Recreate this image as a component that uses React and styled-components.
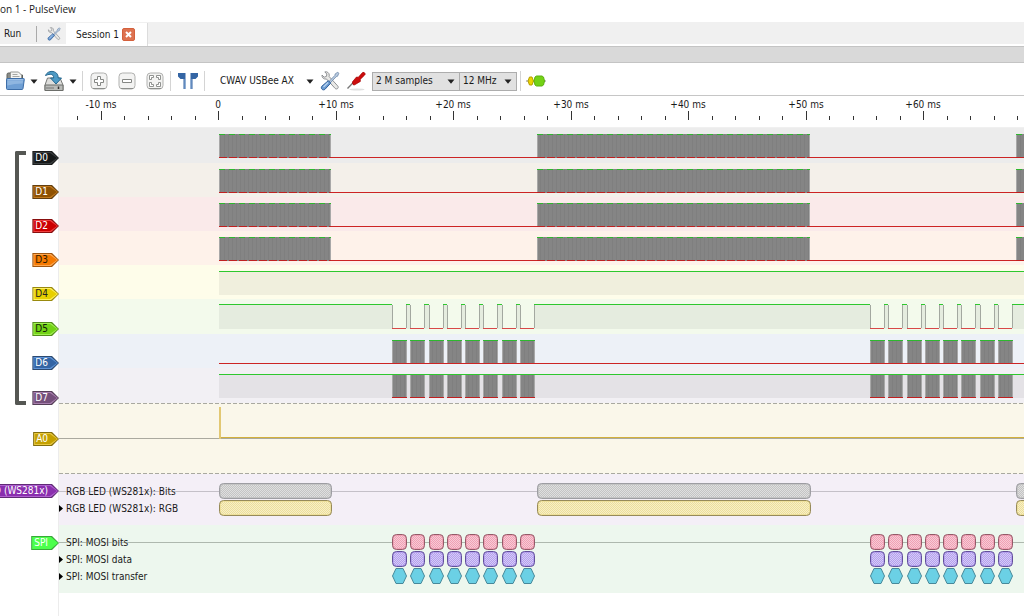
import React, { useEffect, useState } from "react";
import styled, { createGlobalStyle } from "styled-components";

const PX_PER_MS = 11.75;
const ZERO_X = 160;
const HEADER_WIDTH = 59;
const HIGH = 6;
const LOW = 29;

const timeToX = (ms) => ZERO_X + ms * PX_PER_MS;

const BURSTS = [
  [160, 272],
  [478, 751],
  [957, 1230],
];
const makeFrames = (start) =>
  Array.from({ length: 8 }, (_, i) => Math.round(start + i * 18.25));
const FRAME_GROUPS = [makeFrames(333), makeFrames(811)];
const FRAMES = FRAME_GROUPS.flat();
const FRAME_WIDTH = 14;

const CHANNELS = [
  { id: "D0", height: 35, tag: "#16191a", light: "#3a3e40", text: "#fff", back: "#ececec", kind: "burst" },
  { id: "D1", height: 34, tag: "#8f5202", light: "#c17a20", text: "#fff", back: "#f4f0ea", kind: "burst" },
  { id: "D2", height: 34, tag: "#cc0000", light: "#f04040", text: "#fff", back: "#faeaea", kind: "burst" },
  { id: "D3", height: 34, tag: "#f57900", light: "#ffa850", text: "#2a1a00", back: "#fef2ea", kind: "burst" },
  { id: "D4", height: 34, tag: "#e8d000", light: "#fff060", text: "#222", back: "#fefdea", kind: "high" },
  { id: "D5", height: 35, tag: "#73d216", light: "#a0f050", text: "#10200a", back: "#f3faec", kind: "select" },
  { id: "D6", height: 34, tag: "#3465a4", light: "#5f94d8", text: "#fff", back: "#edf1f7", kind: "clock" },
  { id: "D7", height: 35, tag: "#75507b", light: "#a87fae", text: "#fff", back: "#f2f0f4", kind: "data" },
];

const GlobalStyle = createGlobalStyle`
  * { box-sizing: border-box; }
  body {
    margin: 0;
    background: #fff;
    color: #1a1a1a;
    font: 10px/14px "DejaVu Sans Condensed", "Open Sans", sans-serif;
    overflow-x: hidden;
  }
  button, select {
    font: inherit;
    color: inherit;
    border: 0;
    padding: 0;
    margin: 0;
    background: none;
  }
  svg { display: block; }
`;

const Window = styled.div`
  display: flex;
  flex-direction: column;
  min-height: 100vh;
  overflow: hidden;
`;

const TitleBar = styled.header`
  height: 22px;
  padding-top: 1px;
  font: 10px/16px "Open Sans", sans-serif;
  white-space: nowrap;
`;

const TabStrip = styled.nav`
  display: flex;
  align-items: center;
  height: 24px;
  padding: 2px 0 0 4px;
  background: #f0f0f0;
  border-bottom: 2px solid #fff;
`;

const RunButton = styled.button`
  width: 32px;
  text-align: left;
`;

const Divider = styled.span`
  flex: none;
  width: 1px;
  height: ${(p) => p.$height || 20}px;
  background: ${(p) => p.$color || "#d4d4d4"};
`;

const SettingsButton = styled.button`
  display: grid;
  place-items: center;
  width: 29px;
  padding-left: 4px;
`;

const Tab = styled.div`
  display: flex;
  align-items: center;
  gap: 3px;
  align-self: stretch;
  margin: -1px 0 -2px;
  padding: 0 12px 0 10px;
  background: #fff;
  border-right: 1px solid #dcdcdc;
`;

const CloseButton = styled.button`
  display: grid;
  place-items: center;
  width: 13px;
  height: 13px;
  border: 1px solid #d4603c;
  border-radius: 2px;
  background: #dd7250;
`;

const DockBar = styled.div`
  height: 17px;
  background: #d9d9d9;
  border-top: 1px solid #c4c4c4;
  border-bottom: 1px solid #c4c4c4;
`;

const Toolbar = styled.div`
  display: flex;
  align-items: center;
  gap: 3px;
  height: 33px;
  padding: 4px 4px 0;
  border-bottom: 1px solid #c6c6c6;
`;

const SplitButton = styled.div`
  display: flex;
  gap: 2px;
`;

const ToolButton = styled.button`
  display: grid;
  place-items: center;
  flex: none;
  width: ${(p) => p.$width}px;
  height: 24px;
`;

const DeviceButton = styled.button`
  display: flex;
  align-items: center;
  justify-content: space-between;
  flex: none;
  width: 109px;
  height: 24px;
  padding: 0 3px 0 12px;
  white-space: nowrap;
`;

const SelectGroup = styled.div`
  display: flex;
`;

const SelectBox = styled.div`
  display: grid;
  align-items: center;
  width: ${(p) => p.$width}px;
  height: 19px;
  background: #e1e1e1;
  border: 1px solid #adadad;
  & + & { border-left: 0; }
  & > * { grid-area: 1 / 1; }
  & > svg { justify-self: end; margin-right: 4px; pointer-events: none; }
`;

const Select = styled.select`
  appearance: none;
  width: 100%;
  height: 17px;
  padding-left: 3px;
  border-radius: 0;
`;

const Workspace = styled.main`
  display: flex;
  flex: 1;
`;

const HeaderColumn = styled.aside`
  flex: none;
  display: flex;
  flex-direction: column;
  align-items: flex-end;
  width: ${HEADER_WIDTH}px;
  padding-top: 34px;
  overflow: hidden;
`;

const ChannelGroup = styled.div`
  display: flex;
  justify-content: space-between;
  align-self: stretch;
  padding-left: 15px;
`;

const Bracket = styled.div`
  width: 11px;
  margin-top: 21px;
  border: solid #555753;
  border-width: 4px 0 4px 4px;
  border-radius: 2px 0 0 2px;
`;

const TagColumn = styled.div`
  display: flex;
  flex-direction: column;
`;

const TagCell = styled.div`
  display: flex;
  align-items: flex-end;
  height: ${(p) => p.$height}px;
`;

const tagShape = "polygon(0 0, calc(100% - 7px) 0, 100% 50%, calc(100% - 7px) 100%, 0 100%)";

const Tag = styled.button`
  position: relative;
  isolation: isolate;
  height: 14px;
  padding: 0 11px 0 3px;
  line-height: 14px;
  white-space: nowrap;
  color: ${(p) => p.$text};
  background: color-mix(in srgb, ${(p) => p.$fill} 60%, #222);
  clip-path: ${tagShape};
  &::before, &::after {
    content: "";
    position: absolute;
    inset: 1px;
    z-index: -1;
    background: ${(p) => p.$light};
    clip-path: ${tagShape};
  }
  &::after {
    inset: 2px;
    background: ${(p) => p.$fill};
  }
`;

const View = styled.section`
  flex: 1;
  min-width: 0;
  border-left: 1px solid #ececec;
  margin-left: -1px;
  overflow: hidden;
`;

const Ruler = styled.svg`
  width: 100%;
  height: 32px;
  border-bottom: 1px solid #f0f0f0;
`;

const Trace = styled.svg`
  width: 100%;
  height: ${(p) => p.$height}px;
  background: ${(p) => p.$back || "transparent"};
`;

const DecoderTrace = styled.div`
  padding: 9px 0 8px;
  background: ${(p) => p.$back};
`;

const DecoderRow = styled.div`
  display: grid;
  align-items: center;
  height: 17px;
  & > * { grid-area: 1 / 1; }
`;

const RowLabel = styled.span`
  display: flex;
  align-items: center;
  gap: 3px;
  height: 17px;
  padding-left: ${(p) => (p.$expandable ? 0 : 7)}px;
  text-shadow: 0 0 1px ${(p) => p.$back}, 0 0 1px ${(p) => p.$back};
`;

const Caret = () => (
  <svg width="8" height="5" viewBox="0 0 8 5"><path d="M0.5 0.5h7L4 4.8z" fill="#222" /></svg>
);

const ToolsIcon = ({ size }) => (
  <svg width={size} height={size} viewBox="0 0 20 20">
    <path d="M2 4l2.200 2.200L6.500 5.300 6.800 3 4.800 0.900C7 0.300 9.200 1.700 9.300 4.200l-.2 1.300 8.500 9.300c1.800 1.900-.7 4.300-2.500 2.600L6.500 8C4 8.600 1.600 6.600 2 4z" fill="#e8e8e6" stroke="#85878a" strokeWidth=".9" />
    <path d="M18.800 2.200l-1-1-2.600 1.700-.3 1.500-5.700 5.900 1.300 1.300 5.700-5.900 1.400-.5z" fill="#b9cbe0" stroke="#6c87a8" strokeWidth=".8" />
    <path d="M8.300 9.700l2.400 2.400-5.800 6.300c-2 1.500-4.700-.9-3.100-3.100z" fill="#6c9bd0" stroke="#2f5f9b" />
    <path d="M3.500 16l4.500-4.500" stroke="#b8d4f2" strokeWidth="1.200" />
  </svg>
);

const OpenIcon = () => (
  <svg width="20" height="20" viewBox="0 0 20 20">
    <path d="M2 17V3.500Q2 2 3.500 2h4l1 2h9v13z" fill="#8a8c88" stroke="#5c5e5a" />
    <path d="M5.500 11V1h8l3 3V11z" fill="#f4f4f2" stroke="#969894" />
    <path d="M7.500 3.500h5M7.500 5.500h7" stroke="#a5a7a3" />
    <path d="M1.500 8.500Q1.500 7.500 2.500 7.500h16q1 0 .8 1L18 17.500q-.2 1-1 1H2.500q-1 0-1-1z" fill="#6f9fd4" stroke="#3d6ea8" />
    <path d="M2.700 8.700h15.500" stroke="#a9c9ec" />
    <path d="M2.300 9.500h15.800l-.5 3q-8 .2-15.300 2z" fill="#8fb6e0" />
  </svg>
);

const SaveIcon = () => (
  <svg width="22" height="22" viewBox="0 0 22 22">
    <path d="M4.500 8h12.500l3 7v5.500h-18V15z" fill="#dededc" stroke="#777976" />
    <path d="M2 15h18v5.500H2z" fill="#b9bbb8" stroke="#6c6e6a" />
    <path d="M4 17v2m2-2v2m2-2v2m2-2v2" stroke="#777" />
    <path d="M15.500 16.500v2.500" stroke="#333" strokeWidth="1.500" />
    <path d="M2.500 5.500C4 2 7.500 1 10 1.500c4 .8 5.200 3.500 5.200 6.500h3.300L13 14 7.500 8h3.200c0-2.500-1.200-3.700-3.500-3.700-1.800 0-2.700.5-4.700 1.200z" fill="#4d9ac5" stroke="#24678f" />
  </svg>
);

const ZoomFrame = ({ children }) => (
  <svg width="18" height="18" viewBox="0 0 18 18">
    <rect x="1" y="1" width="16" height="16" rx="3.500" fill="#f3f3f2" stroke="#b0b1af" />
    <path d="M3 16.500h12" stroke="#8d8f8c" />
    {children}
  </svg>
);

const ZoomInIcon = () => (
  <ZoomFrame><path d="M7.500 4.500h3v3h3v3h-3v3h-3v-3h-3v-3h3z" fill="#fff" stroke="#858784" /></ZoomFrame>
);
const ZoomOutIcon = () => (
  <ZoomFrame><path d="M4.500 7.500h9v3h-9z" fill="#fff" stroke="#858784" /></ZoomFrame>
);
const ZoomFitIcon = () => (
  <ZoomFrame>
    <path d="M3.500 3.500h4v2h-2v2h-2zM10.500 3.500h4v4h-2v-2h-2zM3.500 10.500h2v2h2v2h-4zM12.500 10.500h2v4h-4v-2h2z" fill="#fff" stroke="#858784" strokeWidth=".9" />
  </ZoomFrame>
);

const CursorsIcon = () => (
  <svg width="22" height="18" viewBox="0 0 22 18">
    <path d="M1 1h7.500v16H6.500V7H3.500L1 4.500zM13.500 1H21v3.500L18.500 7H15.500v10h-2z" fill="#3465a4" />
    <path d="M8 7v10M14 7v10" stroke="#8dafd8" />
  </svg>
);

const ProbeIcon = () => (
  <svg width="20" height="20" viewBox="0 0 20 20">
    <ellipse cx="11" cy="18.500" rx="7.500" ry="1" fill="#e0e0e0" />
    <path d="M1.500 17.500l6-6.300" stroke="#777" strokeWidth="1.300" />
    <path d="M6.500 10.800l4-4.800 1.800.3 4.200-4.700q1.800-.8 2.500.8.5 1-.5 1.800l-4.300 4.200.2 2-5.700 3.400q-1 .4-1.700-.4-.9-1-.5-2.600z" fill="#cc0d0d" stroke="#a40000" strokeWidth=".7" />
  </svg>
);

const DecoderIcon = () => (
  <svg width="20" height="12" viewBox="0 0 20 12">
    <path d="M0 6h20" stroke="#888" />
    <path d="M2 6l1.500-4h2.500L7.500 6 6 10H3.500z" fill="#edd400" stroke="#b59f00" />
    <path d="M8 6l1-4 1.500-1h5.500l1.500 1 1 4-1 4-1.500 1h-5.500l-1.500-1z" fill="#73d216" stroke="#5db00f" />
  </svg>
);

const useViewWidth = () => {
  const [width, setWidth] = useState(window.innerWidth - HEADER_WIDTH);
  useEffect(() => {
    const update = () => setWidth(window.innerWidth - HEADER_WIDTH);
    window.addEventListener("resize", update);
    return () => window.removeEventListener("resize", update);
  }, []);
  return width;
};

const RulerTicks = () => {
  const width = useViewWidth();
  const firstTick = -12;
  const lastTick = (width - ZERO_X) / PX_PER_MS;
  const times = [];
  for (let ms = firstTick; ms <= lastTick; ms += 2) times.push(ms);
  return (
    <Ruler>
      {times.map((ms) => {
        const x = Math.round(timeToX(ms)) - 1;
        const major = ms % 10 === 0;
        return (
          <g key={ms}>
            <rect x={x} y={major ? 15 : 20} width="1" height={major ? 9 : 4} fill="#333" />
            {major && (
              <text x={x} y="12" textAnchor="middle" fill="#1a1a1a">
                {ms === 0 ? "0" : `${ms > 0 ? "+" : ""}${ms} ms`}
              </text>
            )}
          </g>
        );
      })}
    </Ruler>
  );
};

const Patterns = () => (
  <svg width="0" height="0" aria-hidden="true">
    <defs>
      <pattern id="busy" width="8" height="8" patternUnits="userSpaceOnUse">
        <rect width="8" height="8" fill="#858585" />
        <path d="M1.500 0v8M5.500 0v8" stroke="#7f7f7f" />
      </pattern>
      <pattern id="hatch" width="2" height="2" patternUnits="userSpaceOnUse">
        <path d="M0 0h1v1H0zM1 1h1v1H1z" fill="#fff" fillOpacity=".45" />
      </pattern>
    </defs>
  </svg>
);

const Busy = ({ from, to, dashed = true }) => (
  <g>
    <rect x={from} y={HIGH} width={to - from} height={LOW - HIGH + 1} fill="url(#busy)" />
    <path d={`M${from + 0.5} ${HIGH}V${LOW}M${to - 0.5} ${HIGH}V${LOW}`} stroke="#a8a8a8" />
    <path d={`M${from} ${HIGH + 0.5}H${to}`} stroke="#2eb82e" strokeDasharray={dashed ? "6 4" : undefined} />
    <path d={`M${from} ${LOW + 0.5}H${to}`} stroke="#c02020" strokeDasharray={dashed ? "8 2" : undefined} />
  </g>
);

const HighFill = ({ from, to }) => (
  <rect x={from} y={HIGH} width={to ? to - from : "100%"} height={LOW - HIGH + 1} fill="#000" fillOpacity=".055" />
);

const Level = ({ y, from = ZERO_X, to, color }) => (
  <rect x={from} y={y} width={to ? to - from : "100%"} height="1" fill={color} />
);

const GREEN = "#2ec82e";
const RED = "#cc2424";

const SelectLine = () => {
  const highs = [];
  let cursor = ZERO_X;
  FRAMES.forEach((start) => {
    highs.push([cursor, start]);
    cursor = start + FRAME_WIDTH;
  });
  highs.push([cursor, 4000]);
  return (
    <g>
      {highs.map(([from, to]) => (
        <g key={from}>
          <HighFill from={from} to={to} />
          <Level y={HIGH - 1} from={from} to={to} color={GREEN} />
        </g>
      ))}
      {FRAMES.map((x) => (
        <g key={x}>
          <path d={`M${x + 0.5} ${HIGH}V${LOW}M${x + FRAME_WIDTH + 0.5} ${HIGH}V${LOW}`} stroke="#a3a8a0" />
          <Level y={LOW} from={x} to={x + FRAME_WIDTH} color="#d84848" />
        </g>
      ))}
    </g>
  );
};

const Waveform = ({ kind }) => {
  if (kind === "high") return <><HighFill from={ZERO_X} /><Level y={HIGH} color={GREEN} /></>;
  if (kind === "select") return <SelectLine />;
  if (kind === "burst")
    return (
      <>
        <Level y={LOW} color={RED} />
        {BURSTS.map(([a, b]) => <Busy key={a} from={a} to={b} />)}
      </>
    );
  const high = kind === "data";
  return (
    <>
      {high && <HighFill from={ZERO_X} />}
      {FRAMES.map((x) => <Busy key={x} from={x} to={x + FRAME_WIDTH + 1} dashed={false} />)}
      <Level y={high ? HIGH : LOW} color={high ? GREEN : RED} />
    </>
  );
};

const DashedEdge = ({ y = 0 }) => (
  <line x1="0" y1={y + 0.5} x2="100%" y2={y + 0.5} stroke="#a9a9a0" strokeDasharray="4 2" />
);

const Block = ({ x, width, fill, stroke }) => (
  <g>
    <rect x={x + 0.5} y="0.5" width={width} height="15" rx="4" fill={fill} stroke={stroke} />
    <rect x={x + 2} y="2" width={width - 3} height="12" rx="2" fill="url(#hatch)" />
  </g>
);

const BaseLine = ({ color }) => <Level y={8} from={0} color={color} />;

const BurstBlocks = ({ fill, stroke }) =>
  BURSTS.map(([a, b]) => <Block key={a} x={a} width={b - a} fill={fill} stroke={stroke} />);

const FrameBlocks = ({ fill, stroke }) =>
  FRAMES.map((x) => <Block key={x} x={x} width={FRAME_WIDTH} fill={fill} stroke={stroke} />);

const FrameHexagons = () =>
  FRAMES.map((x) => (
    <path key={x} transform={`translate(${x} 0)`} d="M0.500 8L4 0.500h7L14.500 8 11 15.500H4z" fill="#6bd0e5" stroke="#47899a" />
  ));

const ExpandArrow = () => (
  <svg width="4" height="7" viewBox="0 0 4 7"><path d="M0 0l4 3.500L0 7z" fill="#000" /></svg>
);

const AnnotationRow = ({ label, back, expandable, children }) => (
  <DecoderRow>
    <Trace $height={17}>{children}</Trace>
    <RowLabel $expandable={expandable} $back={back}>
      {expandable && <ExpandArrow />}
      {label}
    </RowLabel>
  </DecoderRow>
);

const LED_BACK = "#f4eff7";
const SPI_BACK = "#edf7ee";

export default function App() {
  return (
    <Window>
      <GlobalStyle />
      <Patterns />
      <TitleBar>on 1 - PulseView</TitleBar>
      <TabStrip>
        <RunButton>Run</RunButton>
        <Divider $height={16} $color="#aaa" />
        <SettingsButton aria-label="Settings"><ToolsIcon size={14} /></SettingsButton>
        <Tab>
          Session 1
          <CloseButton aria-label="Close session">
            <svg width="7" height="7" viewBox="0 0 7 7"><path d="M1 1l5 5M6 1L1 6" stroke="#fff" strokeWidth="2" /></svg>
          </CloseButton>
        </Tab>
      </TabStrip>
      <DockBar />
      <Toolbar role="toolbar">
        <SplitButton>
          <ToolButton $width={22} aria-label="Open"><OpenIcon /></ToolButton>
          <ToolButton $width={12} aria-label="Open options"><Caret /></ToolButton>
        </SplitButton>
        <SplitButton>
          <ToolButton $width={22} aria-label="Save"><SaveIcon /></ToolButton>
          <ToolButton $width={12} aria-label="Save options"><Caret /></ToolButton>
        </SplitButton>
        <Divider />
        <ToolButton $width={25} aria-label="Zoom in"><ZoomInIcon /></ToolButton>
        <ToolButton $width={25} aria-label="Zoom out"><ZoomOutIcon /></ToolButton>
        <ToolButton $width={25} aria-label="Zoom to fit"><ZoomFitIcon /></ToolButton>
        <Divider />
        <ToolButton $width={27} aria-label="Show cursors"><CursorsIcon /></ToolButton>
        <Divider />
        <DeviceButton>CWAV USBee AX<Caret /></DeviceButton>
        <ToolButton $width={20} aria-label="Configure device"><ToolsIcon size={20} /></ToolButton>
        <ToolButton $width={26} aria-label="Configure channels"><ProbeIcon /></ToolButton>
        <SelectGroup>
          <SelectBox $width={88}>
            <Select aria-label="Sample count"><option>2 M samples</option></Select>
            <Caret />
          </SelectBox>
          <SelectBox $width={57}>
            <Select aria-label="Sample rate"><option>12 MHz</option></Select>
            <Caret />
          </SelectBox>
        </SelectGroup>
        <Divider />
        <ToolButton $width={24} aria-label="Add protocol decoder"><DecoderIcon /></ToolButton>
      </Toolbar>
      <Workspace>
        <HeaderColumn>
          <ChannelGroup>
            <Bracket />
            <TagColumn>
              {CHANNELS.map((c) => (
                <TagCell key={c.id} $height={c.height}>
                  <Tag $fill={c.tag} $light={c.light} $text={c.text}>{c.id}</Tag>
                </TagCell>
              ))}
            </TagColumn>
          </ChannelGroup>
          <TagCell $height={41}><Tag $fill="#c4a000" $light="#e8c840" $text="#fff">A0</Tag></TagCell>
          <TagCell $height={52}><Tag $fill="#8a2fae" $light="#b060d0" $text="#fff">D (WS281x)</Tag></TagCell>
          <TagCell $height={52}><Tag $fill="#4cff4c" $light="#4cff4c" $text="#fff">SPI</Tag></TagCell>
        </HeaderColumn>
        <View>
          <RulerTicks />
          {CHANNELS.map((c) => (
            <Trace key={c.id} $height={c.height} $back={c.back}><Waveform kind={c.kind} /></Trace>
          ))}
          <Trace $height={71} $back="#faf7ea">
            <DashedEdge />
            <Level y={35} from={0} color="#aaa99f" />
            <Level y={34} color="#d2b03c" />
            <rect x={ZERO_X} y="4" width="2" height="32" fill="#e2c873" />
            <DashedEdge y={70} />
          </Trace>
          <DecoderTrace $back={LED_BACK}>
            <AnnotationRow label="RGB LED (WS281x): Bits" back={LED_BACK}>
              <BaseLine color="#c4c0c8" />
              <BurstBlocks fill="#c4c4c4" stroke="#9d9da2" />
            </AnnotationRow>
            <AnnotationRow label="RGB LED (WS281x): RGB" back={LED_BACK} expandable>
              <BurstBlocks fill="#eee09a" stroke="#968a5a" />
            </AnnotationRow>
          </DecoderTrace>
          <DecoderTrace $back={SPI_BACK}>
            <AnnotationRow label="SPI: MOSI bits" back={SPI_BACK}>
              <BaseLine color="#aeb8ae" />
              <FrameBlocks fill="#f0a0b4" stroke="#935a68" />
            </AnnotationRow>
            <AnnotationRow label="SPI: MOSI data" back={SPI_BACK} expandable>
              <FrameBlocks fill="#b4a0ee" stroke="#62509a" />
            </AnnotationRow>
            <AnnotationRow label="SPI: MOSI transfer" back={SPI_BACK} expandable>
              <FrameHexagons />
            </AnnotationRow>
          </DecoderTrace>
        </View>
      </Workspace>
    </Window>
  );
}
